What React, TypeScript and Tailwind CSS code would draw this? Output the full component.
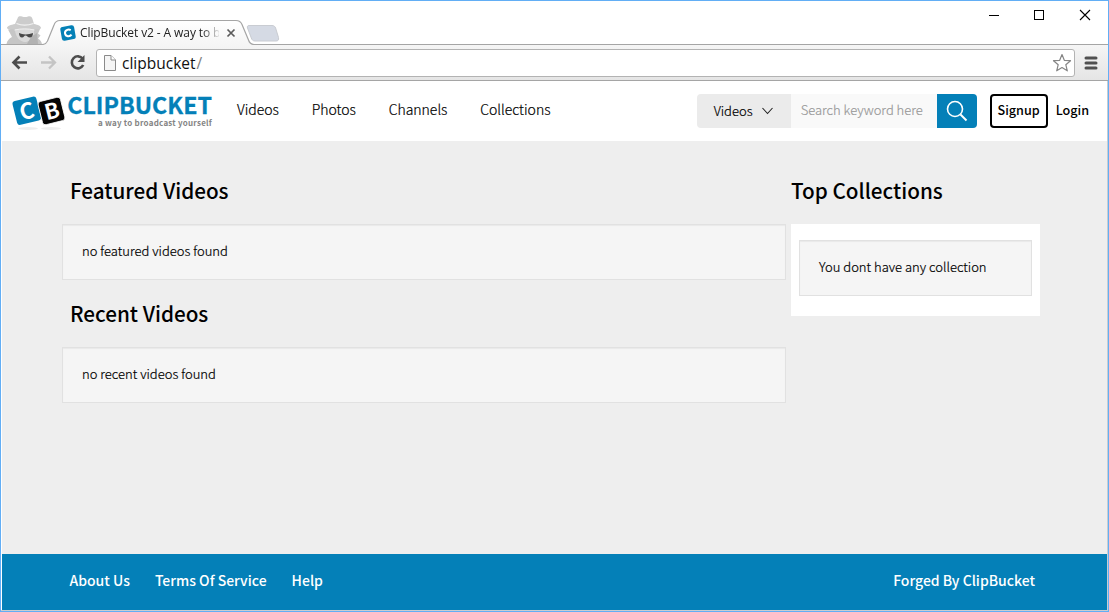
import React from "react";

const sourceFont = "font-['Noto_Sans_CJK_SC','Source_Sans_Pro',sans-serif]";
const chromeFont = "font-['Open_Sans','Noto_Sans',sans-serif]";

function TabStrip() {
  return (
    <div className="relative h-[44px] shrink-0 bg-white">
      <svg className="absolute left-0 top-0" width="1107" height="44" viewBox="1 1 1107 44">
        <defs>
          <linearGradient id="tab" x1="0" y1="20" x2="0" y2="45" gradientUnits="userSpaceOnUse">
            <stop offset="0" stopColor="#ffffff" />
            <stop offset="1" stopColor="#f5f5f5" />
          </linearGradient>
        </defs>
        <path d="M6.500 44C7 41 9 38.500 12 37L8 29.500L16 28L35 27.500L40 29L38 33.500L40.500 35.500L38 38.500C40.500 40 41.500 42 42 44Z" fill="#c6c6c6" />
        <path d="M15 28H34V34C32 40 28 42 25 42C20 42 15.500 37 15 30Z" fill="#dadada" />
        <path d="M27 44L31 37L37 33L38 44Z" fill="#b2b2b2" />
        <path d="M15 24L17.500 18.500C18 16 20 16 22 16.500C24 17.300 26 17.300 28 16.500C30.500 15.500 32 17 32.500 19L34 24C38 24.800 41 26 41 28C41 30 34 29 24.500 28.500C14 29 7 30 7 28C7 26 11 24.800 15 24Z" fill="#cccccc" />
        <path d="M16.500 23.500C21 25.500 28 25.500 33.500 23.500" stroke="#f1f1f1" strokeWidth="1.200" fill="none" />
        <path d="M14.500 30C21 28.500 28 28.500 34.500 30" stroke="#eeeeee" fill="none" />
        <path d="M19 33C21 33.500 23 34.500 25.500 34.500C28 34.500 31 33.500 33 33C33 36 31.500 37.500 30 37.500C27.500 37.500 27 35.500 25.500 35.500C24 35.500 24 37.500 22 37.500C20 37.500 19 35.500 19 33Z" fill="#484848" />
        <path d="M0 44.500H42C45 44.500 46.500 43 47.500 41L54 25C55 22 56.500 20.500 60 20.500H236C239.500 20.500 241 22 242 24.500L248.500 40C249.500 43 251 44.500 254 44.500H1109V46H0Z" fill="url(#tab)" />
        <path d="M0 44.500H42C45 44.500 46.500 43 47.500 41L54 25C55 22 56.500 20.500 60 20.500H236C239.500 20.500 241 22 242 24.500L248.500 40C249.500 43 251 44.500 254 44.500H1109" fill="none" stroke="#a5a5a5" strokeWidth="1.200" />
        <path d="M249 25.500H272C274 25.500 275 26.500 275.600 28L278.500 37.500C279 40 278 41 276 41H255C253 41 252 40 251.300 38L247.500 28C247 26.500 247.500 25.500 249 25.500Z" fill="#d5dae4" stroke="#c9ccd2" />
        <g transform="rotate(-10 68 33)">
          <rect x="61" y="26" width="14" height="14" rx="2.500" fill="#0380b6" />
          <path d="M71.200 30.700C69 28.800 65 29.800 65 33C65 36.200 69 37.300 71.200 35.300" fill="none" stroke="#fff" strokeWidth="2" />
        </g>
        <path d="M227.500 29.500L234.500 36.500M234.500 29.500L227.500 36.500" stroke="#5b5b5b" strokeWidth="1.700" />
        <path d="M989 15.500H999" stroke="#000" />
        <rect x="1034.500" y="10.500" width="9" height="9" fill="none" stroke="#000" />
        <path d="M1080 10L1090 20M1090 10L1080 20" stroke="#000" strokeWidth="1.100" />
      </svg>
      <div className={`absolute left-[79px] top-[23px] w-[139px] overflow-hidden whitespace-nowrap text-[12px] leading-[17px] text-[#222] [mask-image:linear-gradient(to_right,#000_122px,transparent_141px)] ${chromeFont}`}>
        <span className="tracking-[-0.1px]">ClipBucket v2 - A way to b</span>
      </div>
    </div>
  );
}

function Toolbar() {
  return (
    <div className="flex h-[36px] shrink-0 items-center border-b border-[#a5a5a5] bg-gradient-to-b from-[#f5f5f5] to-[#e5e5e5] pl-[9px]">
      <svg width="80" height="24" viewBox="10 51 80 24" fill="none">
        <path d="M27 62.500H13.500M19.500 56.500L13.500 62.500L19.500 68.500" stroke="#4d4d4d" strokeWidth="2.600" />
        <path d="M41 62.500H54.500M49 56.500L55 62.500L49 68.500" stroke="#c4c4c4" strokeWidth="2.300" />
        <path d="M82.700 58.800A6 6 0 1 0 83.200 65" stroke="#4d4d4d" strokeWidth="2.600" />
        <path d="M84.500 55V62H77.500Z" fill="#4d4d4d" />
      </svg>
      <div className="ml-[6px] mt-[1px] flex h-[28px] w-[979px] items-center rounded-[3px] border border-[#b3b3b3] bg-white pl-[7px] pr-[2px]">
        <svg width="12" height="16" viewBox="0 0 12 16">
          <path d="M.5 .5H7L11.500 5V15.500H.5Z" fill="#f5f5f5" stroke="#8a8a8a" />
          <path d="M7 .5V5H11.500" fill="#fff" stroke="#8a8a8a" />
        </svg>
        <span className={`-mt-[1px] ml-[6px] flex-1 text-[15.5px] leading-[20px] text-[#111] ${chromeFont}`}>
          clipbucket<span className="ml-[1px] text-[#808080]">/</span>
        </span>
        <svg width="20" height="20" viewBox="0 0 20 20">
          <path d="M10 1.500L12.300 7.300L18.500 7.700L13.800 11.700L15.300 17.800L10 14.500L4.700 17.800L6.200 11.700L1.500 7.700L7.700 7.300Z" fill="#fff" stroke="#858585" strokeWidth="1.200" strokeLinejoin="round" />
        </svg>
      </div>
      <svg className="ml-[9px]" width="14" height="14" viewBox="0 0 14 14">
        <path d="M2 2H12M2 7H12M2 12H12" stroke="#505050" strokeWidth="3" strokeLinecap="round" />
      </svg>
    </div>
  );
}

function Logo() {
  return (
    <div className="flex h-[60px] w-[202px] shrink-0">
      <svg className="shrink-0" width="56" height="60" viewBox="11 81 56 60">
        <ellipse cx="28" cy="128.500" rx="10" ry="1.500" fill="#eeeeee" />
        <ellipse cx="51" cy="128.500" rx="10" ry="1.500" fill="#eeeeee" />
        <rect x="14.500" y="98.500" width="24.500" height="24.500" rx="3" fill="#0480b8" transform="rotate(-14 26.750 110.750)" />
        <rect x="40" y="99" width="23" height="24" rx="3" fill="#050505" stroke="#fff" strokeWidth=".8" transform="rotate(14 51.500 111) rotate(-28 51.500 111)" />
        <text x="19.500" y="119" transform="rotate(-14 27 111)" className="font-['Noto_Sans_CJK_SC'] font-bold" fontSize="22" fill="#fff">C</text>
        <text x="44.500" y="119" transform="rotate(-14 51 111)" className="font-['Noto_Sans_CJK_SC'] font-bold" fontSize="21.500" fill="#fff">B</text>
      </svg>
      <div className="flex w-[146px] flex-col items-end pr-[1px] pt-[10px]">
        <div className={`whitespace-nowrap text-[23.2px] font-bold leading-[27px] text-[#0480b8] [-webkit-text-stroke:0.3px_#0480b8] ${sourceFont}`}>CLIPBUCKET</div>
        <div className={`whitespace-nowrap text-[8px] font-bold leading-[10px] tracking-[0.23px] text-[#858585] ${sourceFont}`}>a way to broadcast yourself</div>
      </div>
    </div>
  );
}

function Header() {
  return (
    <header className="flex h-[60px] shrink-0 bg-white pl-[9px]">
      <Logo />
      <nav className="ml-[24px] flex flex-1 items-start gap-[32.7px] pt-[18px] text-[14px] font-light leading-[20px] text-black [-webkit-text-stroke:0.2px_#000]">
        <a>Videos</a>
        <a>Photos</a>
        <a>Channels</a>
        <a>Collections</a>
      </nav>
      <div className="mt-[13px] flex h-[34px] w-[280px] overflow-hidden rounded-[4px]">
        <div className="flex w-[94px] items-center bg-[#ebebeb] pl-[17px] text-[13px] font-light leading-[20px] text-black [-webkit-text-stroke:0.2px_#000]">
          <span>Videos</span>
          <svg className="ml-[9px]" width="11" height="8" viewBox="0 0 11 8" fill="none">
            <path d="M.5 1L5.500 6.500L10.500 1" stroke="#222" strokeWidth="1.100" />
          </svg>
        </div>
        <div className="w-[146px] whitespace-nowrap bg-[#f9f9f9] pl-[10px] pt-[6px] text-[13px] font-light leading-[20px] text-[#999] [-webkit-text-stroke:0.2px_#999]">Search keyword here</div>
        <div className="flex w-[40px] items-center justify-center bg-[#0480b8]">
          <svg width="22" height="22" viewBox="0 0 22 22" fill="none" stroke="#fff">
            <circle cx="9" cy="9" r="7.500" strokeWidth="1.600" />
            <path d="M14.500 14.500L20.500 20.500" strokeWidth="2" />
          </svg>
        </div>
      </div>
      <div className="ml-[13px] mt-[13px] flex h-[34px] w-[58px] justify-center rounded-[4px] border-2 border-black pt-[4px] text-[12.6px] font-medium leading-[20px] text-black">Signup</div>
      <div className="ml-[8px] mr-[18px] mt-[19px] text-[12.6px] font-medium leading-[20px] text-black">Login</div>
    </header>
  );
}

function Notice({ children }: { children: React.ReactNode }) {
  return (
    <div className="h-[56px] border border-[#e1e1e1] bg-[#f5f5f5] pl-[19px] pt-[16px] text-[13px] font-light leading-[20px] text-black shadow-[inset_0_1px_1px_rgba(0,0,0,0.05)] [-webkit-text-stroke:0.2px_#000]">
      {children}
    </div>
  );
}

function Heading({ children }: { children: React.ReactNode }) {
  return <h2 className="whitespace-nowrap text-[20.7px] font-medium leading-[30px] text-black">{children}</h2>;
}

export default function App() {
  return (
    <div className="flex h-[612px] w-[1109px] flex-col overflow-hidden border border-[#62aef5] bg-white">
      <TabStrip />
      <Toolbar />
      <div className={`flex min-h-0 flex-1 flex-col border-b border-r border-[#c9cdd0] pl-[1px] ${sourceFont}`}>
        <Header />
        <main className="flex flex-1 gap-[5px] bg-[#eeeeee] pl-[60px] pt-[34px]">
          <section className="w-[724px]">
            <div className="pl-[8px]"><Heading>Featured Videos</Heading></div>
            <div className="mt-[19px]"><Notice>no featured videos found</Notice></div>
            <div className="mt-[18px] pl-[8px]"><Heading>Recent Videos</Heading></div>
            <div className="mt-[19px]"><Notice>no recent videos found</Notice></div>
          </section>
          <aside className="w-[249px]">
            <div><Heading>Top Collections</Heading></div>
            <div className="mt-[19px] h-[92px] bg-white px-[8px] pt-[16px]">
              <Notice>You dont have any collection</Notice>
            </div>
          </aside>
        </main>
        <footer className="flex h-[56px] shrink-0 gap-[25px] bg-[#0480b8] pl-[67.5px] pr-[72px] pt-[16px] text-[14px] font-medium leading-[20px] text-white">
          <a>About Us</a>
          <a>Terms Of Service</a>
          <a>Help</a>
          <span className="ml-auto">Forged By ClipBucket</span>
        </footer>
      </div>
    </div>
  );
}
